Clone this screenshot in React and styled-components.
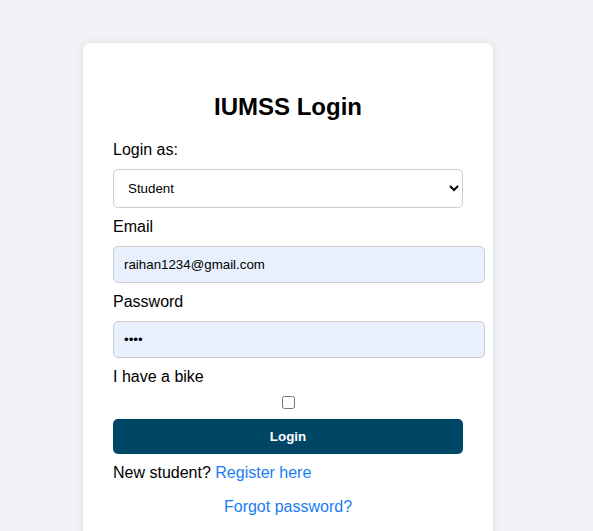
import React from 'react';
import styled, { createGlobalStyle } from 'styled-components';

const GlobalStyle = createGlobalStyle`
  html, body {
    margin: 0;
    padding: 0;
    overflow: hidden;
  }
  body {
    background-color: #f0f2f5;
    font-family: "Liberation Sans", Arial, sans-serif;
    color: #000;
  }
`;

const Page = styled.div`
  padding: 43px 0 0 83px;
  min-height: 531px;
  box-sizing: border-box;
`;

const Card = styled.div`
  width: 350px;
  padding: 30px;
  background-color: #fff;
  border-radius: 8px;
  box-shadow: 0 0 10px rgba(0, 0, 0, 0.08);
`;

const Title = styled.h2`
  margin: 19.92px 0;
  font-size: 24px;
  font-weight: bold;
  text-align: center;
`;

const Label = styled.label`
  display: block;
  font-size: 16px;
`;

const Select = styled.select`
  display: block;
  width: 100%;
  margin: 10px 0;
  padding: 10px;
  font-family: "Liberation Sans", Arial, sans-serif;
  font-size: 13.33px;
  background-color: #fff;
  border: 1px solid #ccc;
  border-radius: 5px;
  color: #000;
`;

const Input = styled.input`
  display: block;
  width: 100%;
  margin: 10px 0;
  padding: 10px;
  font-family: "Liberation Sans", Arial, sans-serif;
  font-size: 13.33px;
  background-color: #e8f0fe;
  border: 1px solid #ccc;
  border-radius: 5px;
  color: #000;
  outline: none;
`;

const Checkbox = styled.input`
  display: block;
  width: 13px;
  height: 13px;
  margin: 10px auto;
`;

const Button = styled.button`
  display: block;
  width: 100%;
  padding: 10px;
  margin: 0;
  border: none;
  border-radius: 5px;
  background-color: #004766;
  color: #fff;
  font-family: "Liberation Sans", Arial, sans-serif;
  font-size: 13.33px;
  font-weight: bold;
  cursor: pointer;
`;

const Note = styled.p`
  margin: ${(p) => p.$top}px 0 0;
  font-size: 16px;
  text-align: ${(p) => (p.$center ? 'center' : 'left')};
`;

const TextLink = styled.a`
  color: #1a7cf5;
  text-decoration: none;
`;

function App() {
  return (
    <>
      <GlobalStyle />
      <Page>
        <Card>
          <Title>IUMSS Login</Title>
          <Label>Login as:</Label>
          <Select defaultValue="student">
            <option value="student">Student</option>
            <option value="teacher">Teacher</option>
            <option value="admin">Admin</option>
          </Select>
          <Label>Email</Label>
          <Input type="email" defaultValue="raihan1234@gmail.com" />
          <Label>Password</Label>
          <Input type="password" defaultValue="1234" />
          <Label>I have a bike</Label>
          <Checkbox type="checkbox" />
          <Button>Login</Button>
          <Note $top={10}>
            New student? <TextLink href="#">Register here</TextLink>
          </Note>
          <Note $top={16} $center>
            <TextLink href="#">Forgot password?</TextLink>
          </Note>
        </Card>
      </Page>
    </>
  );
}

export default App;
